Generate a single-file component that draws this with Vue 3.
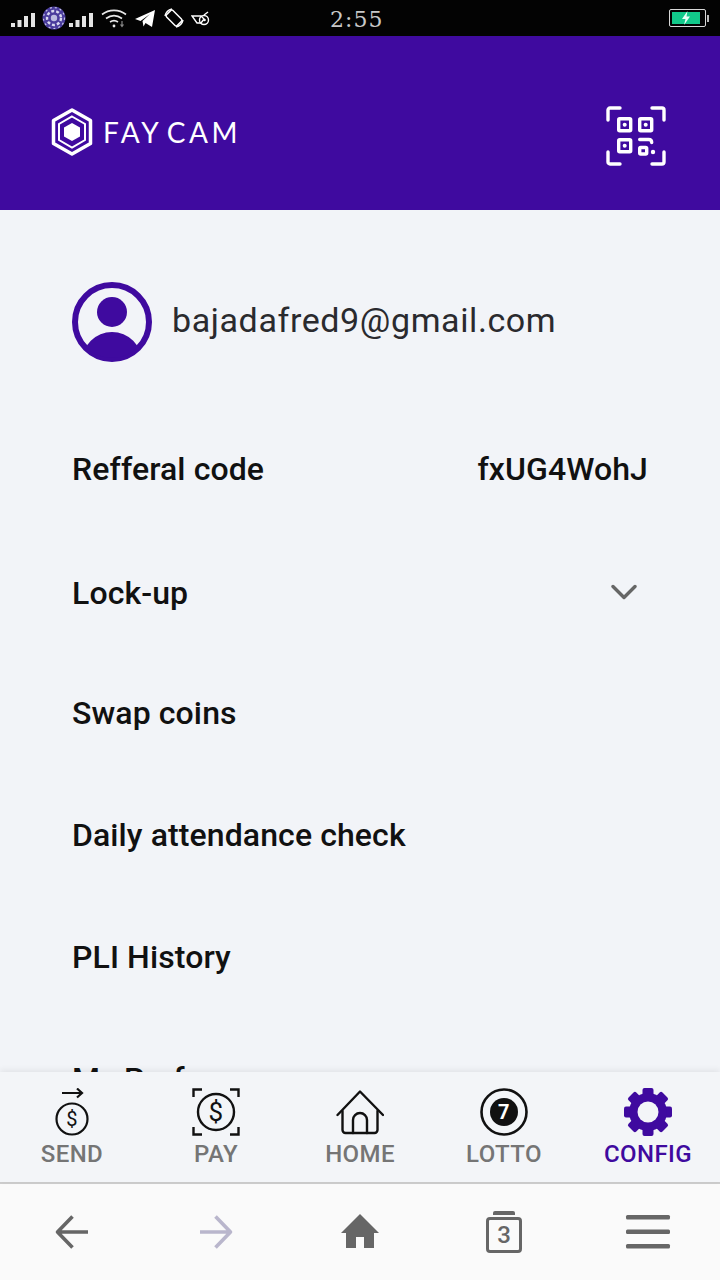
<template>
  <div class="phone">
    <div class="status-bar">
      <div class="status-icons">
        <svg class="signal" viewBox="0 0 25 14"><rect x="0" y="10" width="4" height="4" /><rect x="6.500" y="7" width="4" height="7" /><rect x="13" y="3" width="4" height="11" /><rect x="20" y="0" width="4" height="14" /></svg>
        <svg class="globe" viewBox="0 0 24 24">
          <circle cx="12" cy="12" r="11.500" fill="#4a3c9c" />
          <circle cx="12" cy="12" r="7" fill="none" stroke="#d8d8ee" stroke-width="2.400" stroke-dasharray="3 2" />
          <circle cx="12" cy="12" r="3.200" fill="#bcbce0" />
          <circle cx="12" cy="12" r="10.500" fill="none" stroke="#c4c4e4" stroke-width="1.200" stroke-dasharray="2 3" />
        </svg>
        <svg class="signal" viewBox="0 0 25 14"><rect x="0" y="10" width="4" height="4" /><rect x="6.500" y="7" width="4" height="7" /><rect x="13" y="3" width="4" height="11" /><rect x="20" y="0" width="4" height="14" /></svg>
        <svg class="wifi" viewBox="0 0 26 20" fill="none" stroke="#e8e8e8" stroke-width="1.600">
          <path d="M1 6.500C8 1 18 1 25 6.500" />
          <path d="M5 10.500c5-3.600 11-3.600 16 0" />
          <path d="M9 14c2.600-1.800 5.400-1.800 8 0" />
          <circle cx="13" cy="18" r="1.400" fill="#e8e8e8" stroke="none" />
          <path d="M21 13v5M19.500 16.500l1.500 2 1.500-2" stroke="#888" stroke-width="1.200" />
        </svg>
        <svg class="telegram" viewBox="0 0 20 17"><path d="M0 9 20 0 17 17 10.500 13 8.500 16.500 7.500 11 15 4 5.500 11Z" fill="#fff" /></svg>
        <svg class="rotate" viewBox="0 0 20 20" fill="none" stroke="#fff" stroke-width="1.500">
          <rect x="5.500" y="2.500" width="9" height="15" rx="1.500" transform="rotate(-45 10 10)" />
          <path d="M1 8A9.500 9.500 0 0 1 8 1M19 12A9.500 9.500 0 0 1 12 19" />
        </svg>
        <svg class="bird" viewBox="0 0 20 15" fill="none" stroke="#fff" stroke-width="1.400">
          <path d="M1 5h9l3 3-3 4H6Z" />
          <circle cx="13" cy="9" r="4.500" />
          <circle cx="13.500" cy="9" r="1.300" fill="#fff" stroke="none" />
          <path d="M13 4 17 1" />
        </svg>
      </div>
      <span class="clock">2:55</span>
      <div class="battery">
        <div class="battery-body">
          <div class="battery-fill">
            <svg viewBox="0 0 10 14" width="10" height="14"><path d="M6.500 0 1 8h3.500L3 14 9 5.500H5.500Z" fill="#e8fff6" /></svg>
          </div>
        </div>
        <div class="battery-nub"></div>
      </div>
    </div>

    <header class="top-bar">
      <div class="logo">
        <svg class="logo-mark" viewBox="0 0 42 48" fill="none" stroke="#fff">
          <path d="M21 2 39.500 12.500V35.500L21 46 2.500 35.500V12.500Z" stroke-width="3.500" stroke-linejoin="round" />
          <path d="M21 8.500 34 16V32L21 39.500 8 32V16Z" stroke-width="2" />
          <path d="M21 15 29 19.500V28.500L21 33 13 28.500V19.500Z" fill="#fff" stroke="none" />
        </svg>
        <span class="logo-text">FAY CAM</span>
      </div>
      <svg class="qr" viewBox="0 0 60 60" fill="none" stroke="#fff" stroke-width="3.400" stroke-linecap="round" stroke-linejoin="round">
        <path d="M2 14V4a2 2 0 0 1 2-2h10M46 2h10a2 2 0 0 1 2 2v10M58 46v10a2 2 0 0 1-2 2H46M14 58H4a2 2 0 0 1-2-2V46" />
        <rect x="12.700" y="12.700" width="12" height="12" rx="1" />
        <rect x="33.700" y="12.700" width="12" height="12" rx="1" />
        <rect x="12.700" y="33.700" width="12" height="12" rx="1" />
        <rect x="33.700" y="41.500" width="7" height="6.500" rx="1" />
        <path d="M33.700 33.500h9c2 0 3 1 3 3" />
        <g fill="#fff" stroke="none">
          <circle cx="18.700" cy="18.700" r="2" />
          <circle cx="39.700" cy="18.700" r="2" />
          <circle cx="18.700" cy="39.700" r="2" />
          <circle cx="47" cy="46" r="2.200" />
        </g>
      </svg>
    </header>

    <main class="content">
      <div class="profile">
        <svg class="avatar" viewBox="0 0 80 80">
          <clipPath id="avatar-clip"><circle cx="40" cy="40" r="36" /></clipPath>
          <circle cx="40" cy="40" r="37" fill="none" stroke="#3f0a9f" stroke-width="6" />
          <circle cx="40" cy="30" r="15" fill="#3f0a9f" />
          <circle cx="40" cy="80" r="30" fill="#3f0a9f" clip-path="url(#avatar-clip)" />
        </svg>
        <span class="email">bajadafred9@gmail.com</span>
      </div>

      <div class="row">
        <span>Refferal code</span>
        <span>fxUG4WohJ</span>
      </div>
      <div class="row row-lock">
        <span>Lock-up</span>
        <svg class="chevron" viewBox="0 0 26 16" fill="none" stroke="#666" stroke-width="3.400" stroke-linecap="round" stroke-linejoin="round"><path d="M2 2.500 13 13.500 24 2.500" /></svg>
      </div>
      <div v-for="label in menuRows" :key="label" class="row">
        <span>{{ label }}</span>
      </div>
    </main>

    <nav class="tabs">
      <div class="tab">
        <svg class="tab-icon" viewBox="0 0 48 48" fill="none" stroke="#111" stroke-width="2.200">
          <path d="M14 5H34M29 0.500 34 5 29 9.500" />
          <circle cx="24" cy="31" r="15.500" />
          <text x="24" y="38" class="dollar small">$</text>
        </svg>
        <span>SEND</span>
      </div>
      <div class="tab">
        <svg class="tab-icon" viewBox="0 0 48 48" fill="none" stroke="#111" stroke-width="2.400">
          <path d="M1.500 9V1.500H10M38 1.500H46.500V9M46.500 39V46.500H38M10 46.500H1.500V39" />
          <circle cx="24" cy="24" r="18" />
          <text x="24" y="33" class="dollar">$</text>
        </svg>
        <span>PAY</span>
      </div>
      <div class="tab">
        <svg class="tab-icon" viewBox="0 0 48 48" fill="none" stroke="#111" stroke-width="2.400" stroke-linejoin="round" stroke-linecap="round">
          <path d="M1.500 27 24 3.500 47 27" />
          <path d="M6.500 23V42a3 3 0 0 0 3 3H38.500a3 3 0 0 0 3-3V23" />
          <path d="M17 45V32a7 7 0 0 1 14 0V45" />
        </svg>
        <span>HOME</span>
      </div>
      <div class="tab">
        <svg class="tab-icon" viewBox="0 0 48 48">
          <circle cx="24" cy="24" r="22.500" fill="none" stroke="#111" stroke-width="2.600" />
          <circle cx="24" cy="24" r="14" fill="#111" />
          <text x="24" y="31" class="seven">7</text>
        </svg>
        <span>LOTTO</span>
      </div>
      <div class="tab tab-active">
        <svg class="tab-icon" viewBox="0 0 48 48">
          <rect v-for="angle in gearAngles" :key="angle" x="18.500" y="0" width="11" height="12" rx="2" fill="#3f0a9f" :transform="`rotate(${angle} 24 24)`" />
          <circle cx="24" cy="24" r="19" fill="#3f0a9f" />
          <circle cx="24" cy="24" r="10.500" fill="#f3f5f8" />
        </svg>
        <span>CONFIG</span>
      </div>
    </nav>

    <footer class="browser-bar">
      <svg class="bar-icon" viewBox="0 0 40 40" fill="none" stroke="#666" stroke-width="3.600" stroke-linejoin="round">
        <path d="M36 20H5.500M20.500 4.500 5.500 20 20.500 35.500" />
      </svg>
      <svg class="bar-icon" viewBox="0 0 40 40" fill="none" stroke="#b9b6cc" stroke-width="3.600" stroke-linejoin="round">
        <path d="M4 20H34.500M19.500 4.500 34.500 20 19.500 35.500" />
      </svg>
      <svg class="bar-icon home-icon" viewBox="0 0 48 48">
        <path d="M24 6 43 25H38V40H28V29H20V40H10V25H5Z" fill="#666" />
      </svg>
      <div class="tab-count">
        <div class="tab-count-lid"></div>
        <div class="tab-count-box">3</div>
      </div>
      <svg class="bar-icon menu-icon" viewBox="0 0 48 48" fill="#666">
        <rect x="2" y="7" width="44" height="4.500" rx="1.500" />
        <rect x="2" y="21.500" width="44" height="4.500" rx="1.500" />
        <rect x="2" y="36" width="44" height="4.500" rx="1.500" />
      </svg>
    </footer>
  </div>
</template>

<script setup>
const menuRows = ['Swap coins', 'Daily attendance check', 'PLI History', 'My Performance']
const gearAngles = [0, 45, 90, 135, 180, 225, 270, 315]
</script>

<style>
html,
body {
  margin: 0;
  background: #f2f4f8;
}
</style>

<style scoped>
.phone {
  display: flex;
  flex-direction: column;
  width: 720px;
  height: 1280px;
  overflow: hidden;
  font-family: Roboto, "Liberation Sans", sans-serif;
  background: #f2f4f8;
}

.status-bar {
  display: flex;
  align-items: center;
  flex: 0 0 36px;
  position: relative;
  padding: 0 11px;
  box-sizing: border-box;
  background: #030303;
}

.status-icons {
  display: flex;
  align-items: center;
  gap: 3px;
}

.signal {
  width: 25px;
  height: 14px;
  margin-top: 4px;
  fill: #e4e4e4;
}

.globe {
  width: 24px;
  height: 24px;
  margin-left: 3px;
}

.wifi {
  width: 26px;
  height: 20px;
  margin-left: 4px;
}

.telegram {
  width: 20px;
  height: 17px;
  margin-left: 5px;
}

.rotate {
  width: 20px;
  height: 20px;
  margin-left: 6px;
}

.bird {
  width: 20px;
  height: 15px;
  margin-left: 4px;
}

.clock {
  position: absolute;
  left: 330px;
  top: 7px;
  font-family: "DejaVu Serif", serif;
  font-size: 22px;
  letter-spacing: 1px;
  color: #c8c8c8;
}

.battery {
  display: flex;
  align-items: center;
  gap: 1px;
  margin-left: auto;
}

.battery-body {
  display: flex;
  width: 37px;
  height: 18px;
  padding: 2px;
  box-sizing: border-box;
  border: 1px solid #d8d8d8;
  border-radius: 2px;
}

.battery-fill {
  display: flex;
  align-items: center;
  justify-content: center;
  width: 28px;
  background: #12c98a;
}

.battery-nub {
  width: 2px;
  height: 7px;
  background: #bbb;
}

.top-bar {
  display: flex;
  align-items: center;
  justify-content: space-between;
  flex: 0 0 174px;
  padding: 18px 54px 0 51px;
  box-sizing: border-box;
  background: #3f0a9f;
}

.logo {
  display: flex;
  align-items: center;
  gap: 10px;
}

.logo-mark {
  width: 42px;
  height: 48px;
}

.logo-text {
  font-family: Lato, sans-serif;
  font-size: 28px;
  font-weight: 400;
  letter-spacing: 3.500px;
  word-spacing: -5px;
  line-height: 1;
  color: #fff;
}

.qr {
  width: 60px;
  height: 60px;
  margin-top: 8px;
}

.content {
  flex: 1;
  min-height: 0;
  overflow: hidden;
  padding: 72px 72px 0;
}

.profile {
  display: flex;
  align-items: center;
  gap: 20px;
  margin-bottom: 46px;
}

.avatar {
  width: 80px;
  height: 80px;
}

.email {
  font-size: 34px;
  letter-spacing: 0.600px;
  margin-top: -4px;
  color: #2a2a2e;
}

.row {
  display: flex;
  align-items: center;
  justify-content: space-between;
  height: 122px;
  font-size: 32px;
  font-weight: 500;
  letter-spacing: 0.100px;
  color: #111;
}

.row-lock {
  box-sizing: border-box;
  padding-top: 4px;
}

.chevron {
  width: 26px;
  height: 16px;
  margin: 0 11px 2px 0;
}

.tabs {
  display: grid;
  grid-template-columns: repeat(5, 144px);
  flex: 0 0 110px;
  position: relative;
  box-shadow: 0 -2px 6px rgba(0, 0, 0, 0.07);
  background: #f3f5f8;
}

.tab {
  display: flex;
  flex-direction: column;
  align-items: center;
  padding-top: 16px;
  font-size: 24px;
  font-weight: 500;
  letter-spacing: 0.400px;
  color: #757575;
}

.tab span {
  margin-top: 3px;
  line-height: 30px;
}

.tab-active {
  color: #3f0a9f;
}

.tab-icon {
  width: 48px;
  height: 48px;
}

.dollar {
  font-family: Roboto, sans-serif;
  font-size: 26px;
  font-weight: 400;
  text-anchor: middle;
  fill: #111;
  stroke: none;
}

.small {
  font-size: 20px;
}

.seven {
  font-family: Roboto, sans-serif;
  font-size: 20px;
  font-weight: 700;
  text-anchor: middle;
  fill: #fff;
}

.browser-bar {
  display: grid;
  grid-template-columns: repeat(5, 144px);
  justify-items: center;
  align-items: center;
  flex: 0 0 98px;
  box-sizing: border-box;
  border-top: 2px solid #cdcdcd;
  background: #fafafa;
}

.bar-icon {
  width: 40px;
  height: 40px;
}

.home-icon,
.menu-icon {
  width: 48px;
  height: 48px;
}

.tab-count {
  display: flex;
  flex-direction: column;
  align-items: center;
  gap: 2px;
}

.tab-count-lid {
  width: 22px;
  height: 4px;
  border-radius: 2px 2px 0 0;
  background: #666;
}

.tab-count-box {
  display: flex;
  align-items: center;
  justify-content: center;
  width: 36px;
  height: 36px;
  box-sizing: border-box;
  border: 3px solid #666;
  border-radius: 4px;
  font-size: 24px;
  font-weight: 500;
  color: #666;
}
</style>
